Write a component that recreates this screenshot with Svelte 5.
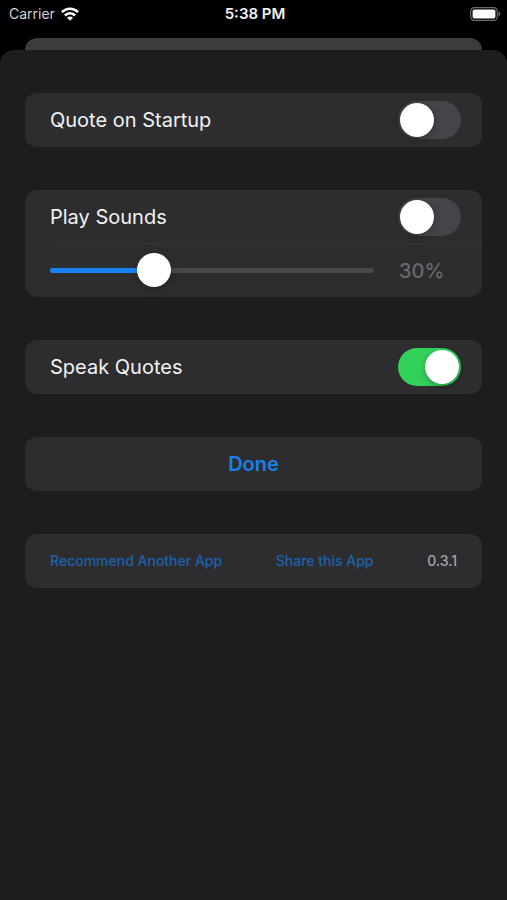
<script lang="ts">
    let quoteOnStartup = false;
    let playSounds = false;
    let speakQuotes = true;
    let volume = 30;

    const version = '0.3.1';
</script>

<div class="screen">
    <header class="status">
        <div class="carrier">
            <span>Carrier</span>
            <svg width="18" height="14" viewBox="0 0 18 14" aria-hidden="true">
                <g fill="none" stroke="#fff" stroke-width="2.6">
                    <path d="M0.9 5.2C5.4 0.5 12.6 0.5 17.1 5.2" />
                    <path d="M3.9 8.5C6.8 5.5 11.2 5.5 14.1 8.5" />
                </g>
                <path d="M9 13.8L6 10.8C7.7 9.2 10.3 9.2 12 10.8Z" fill="#fff" />
            </svg>
        </div>
        <time>5:38 PM</time>
        <div class="battery">
            <svg width="31" height="14" viewBox="0 0 31 14" aria-hidden="true">
                <rect x="0.7" y="0.7" width="26.6" height="12.6" rx="3.6" fill="none" stroke="#6c6c6c" stroke-width="1.2" />
                <rect x="2.6" y="2.4" width="22.8" height="9.2" rx="1.8" fill="#fff" />
                <path d="M28.6 4.8Q30.3 5.4 30.3 7T28.6 9.2Z" fill="#777" />
            </svg>
        </div>
    </header>

    <div class="behind"></div>

    <main class="sheet">
        <section class="card">
            <label class="row">
                <span>Quote on Startup</span>
                <input class="switch" type="checkbox" role="switch" bind:checked={quoteOnStartup} />
            </label>
        </section>

        <section class="card">
            <label class="row">
                <span>Play Sounds</span>
                <input class="switch" type="checkbox" role="switch" bind:checked={playSounds} />
            </label>
            <div class="volume">
                <input
                    type="range"
                    min="0"
                    max="100"
                    aria-label="Volume"
                    bind:value={volume}
                    style="--fill: {volume}%"
                />
                <output>{volume}%</output>
            </div>
        </section>

        <section class="card">
            <label class="row">
                <span>Speak Quotes</span>
                <input class="switch" type="checkbox" role="switch" bind:checked={speakQuotes} />
            </label>
        </section>

        <button class="card done" type="button">Done</button>

        <footer class="card links">
            <a href="#recommend">Recommend Another App</a>
            <a href="#share">Share this App</a>
            <span>{version}</span>
        </footer>
    </main>
</div>

<style>
    :global(body) {
        margin: 0;
        background: #000;
    }

    .screen {
        display: flex;
        flex-direction: column;
        min-height: 100vh;
        background: #000;
        color: #f2f2f3;
        font-family: Inter, "Liberation Sans", sans-serif;
        font-size: 20px;
        line-height: 24px;
    }

    .status {
        display: grid;
        grid-template-columns: 1fr auto 1fr;
        align-items: center;
        height: 28px;
        padding: 0 6px 0 9px;
        margin-bottom: 10px;
        font-size: 14px;
        line-height: 20px;
    }

    .carrier {
        display: flex;
        align-items: center;
        gap: 6px;
        color: #d2d2d2;
    }

    .status svg {
        display: block;
    }

    .status time {
        font-size: 15px;
        font-weight: 600;
    }

    .battery {
        justify-self: end;
    }

    .behind {
        height: 12px;
        margin: 0 25px;
        border-radius: 12px 12px 0 0;
        background: #3c3c3d;
    }

    .sheet {
        flex: 1;
        display: flex;
        flex-direction: column;
        gap: 43px;
        padding: 43px 25px;
        border-radius: 14px 14px 0 0;
        background: #1d1d1f;
    }

    .card {
        border-radius: 12px;
        background: #2d2d2f;
    }

    .row {
        display: flex;
        align-items: center;
        justify-content: space-between;
        height: 54px;
        padding: 0 21px 0 25px;
    }

    .switch {
        appearance: none;
        width: 63px;
        height: 38px;
        margin: 0;
        padding: 2px;
        box-sizing: border-box;
        border-radius: 19px;
        background: #454549;
        transition: background 0.2s;
    }

    .switch::before {
        content: '';
        display: block;
        width: 34px;
        height: 34px;
        border-radius: 50%;
        background: #fff;
        box-shadow: 0 2px 6px rgba(0, 0, 0, 0.3);
        transition: margin 0.2s;
    }

    .switch:checked {
        background: #32d15a;
    }

    .switch:checked::before {
        margin-left: 25px;
    }

    /* the divider overlaps the row above by its own width */
    .volume {
        display: flex;
        align-items: center;
        gap: 25px;
        height: 54px;
        margin: -1px 0 0 25px;
        padding-right: 21px;
        box-sizing: border-box;
        border-top: 1px solid #343437;
    }

    .volume input {
        appearance: none;
        flex: 1;
        min-width: 0;
        height: 34px;
        margin: 0;
        background: none;
    }

    .volume input::-webkit-slider-runnable-track {
        height: 5px;
        border-radius: 3px;
        background: linear-gradient(to right, #1883f5 var(--fill), #48484a var(--fill));
    }

    .volume input::-webkit-slider-thumb {
        appearance: none;
        width: 34px;
        height: 34px;
        margin-top: -15px;
        border-radius: 50%;
        background: #fff;
        box-shadow: 0 2px 8px rgba(0, 0, 0, 0.25);
    }

    .volume output {
        width: 62px;
        color: #68686b;
        font-weight: 500;
    }

    .done {
        height: 54px;
        padding: 0;
        border: 0;
        color: #1a80e6;
        font: inherit;
        font-weight: 600;
    }

    .links {
        display: flex;
        align-items: center;
        justify-content: space-between;
        height: 54px;
        padding: 0 25px;
        font-size: 14px;
        font-weight: 500;
        line-height: 20px;
    }

    .links a {
        color: #1c62ad;
        text-decoration: none;
    }

    .links span {
        color: #a5a5a7;
    }
</style>
